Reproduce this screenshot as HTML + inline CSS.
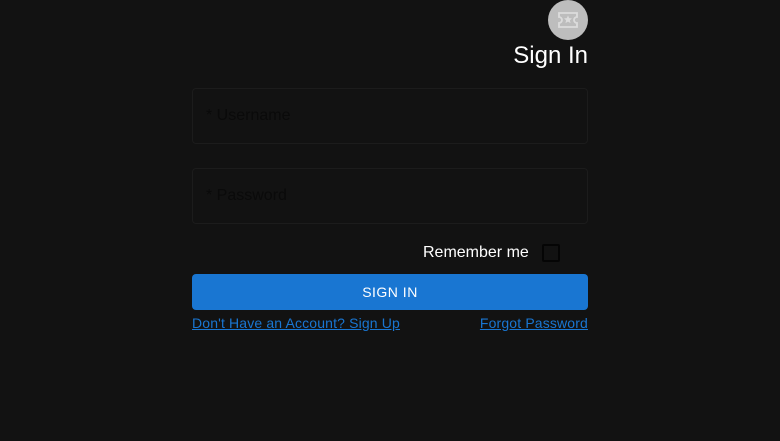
<!DOCTYPE html>
<html><head><style>
body{margin:0;width:780px;height:441px;background:#121212;font-family:"Liberation Sans",sans-serif;position:relative;overflow:hidden}
.a{position:absolute}
.field{position:absolute;left:192px;width:394px;height:54px;border:1px solid #1c1c1c;border-radius:4px}
.field span{position:absolute;left:13px;top:18px;font-size:16px;color:#0a0a0a}
a{color:#1976d2;text-decoration:underline;font-size:14px;letter-spacing:.15px}
</style></head><body>
<div class="a" style="left:548px;top:0;width:40px;height:40px;border-radius:50%;background:#bdbdbd">
<svg width="40" height="40" viewBox="0 0 40 40"><path d="M11 13h18v4a3 3 0 0 0 0 6v4H11v-4a3 3 0 0 0 0-6z" fill="none" stroke="#dcdcdc" stroke-width="1.8"/><path d="M20 15.5l1.2 2.6 2.8.3-2.1 1.9.6 2.8-2.5-1.5-2.5 1.5.6-2.8-2.1-1.9 2.8-.3z" fill="#dcdcdc"/></svg></div>
<div class="a" style="right:192px;top:42px;font-size:24px;color:#fff">Sign In</div>
<div class="field" style="top:88px"><span>* Username</span></div>
<div class="field" style="top:168px"><span>* Password</span></div>
<div class="a" style="left:423px;top:244px;font-size:16px;color:#fff">Remember me</div>
<div class="a" style="left:542px;top:244px;width:14px;height:14px;border:2px solid #050505;border-radius:2px"></div>
<div class="a" style="left:192px;top:274px;width:396px;height:36px;background:#1976d2;border-radius:4px;color:#fff;font-size:14px;text-align:center;line-height:36px;letter-spacing:.5px">SIGN IN</div>
<a class="a" style="left:192px;top:315px">Don't Have an Account? Sign Up</a>
<a class="a" style="right:192px;top:315px">Forgot Password</a>
</body></html>
